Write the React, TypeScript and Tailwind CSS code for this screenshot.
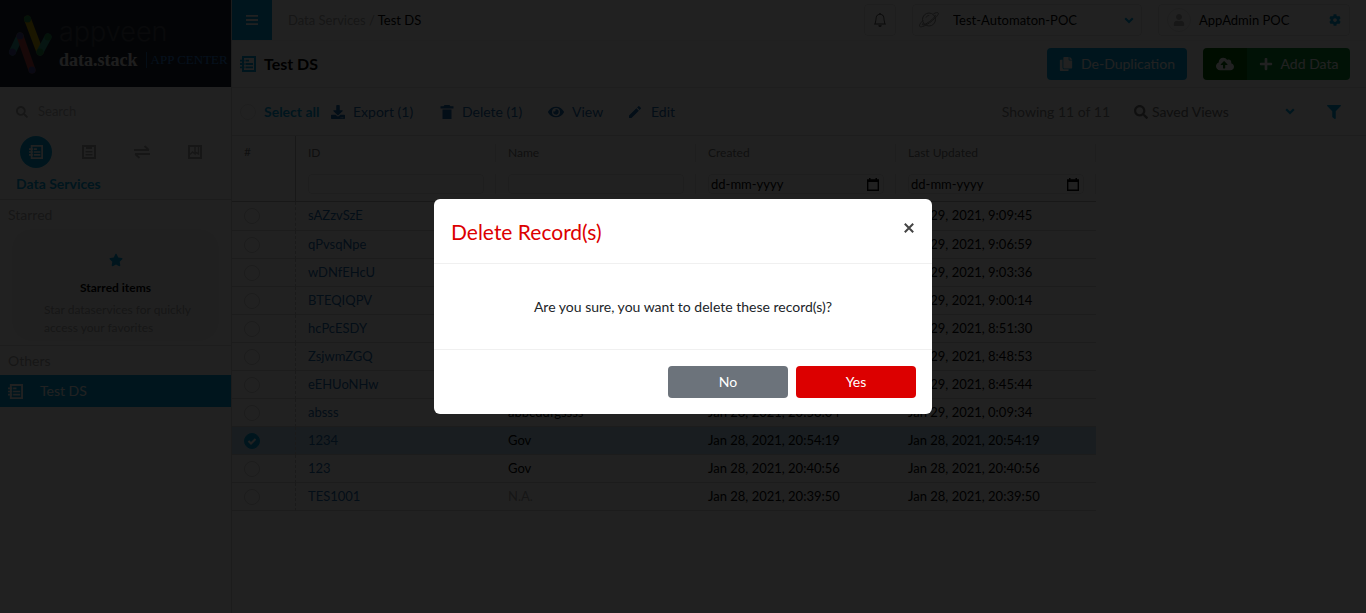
import { useState } from "react";
import type { ReactNode } from "react";
import { BsBell } from "react-icons/bs";
import {
  FaCloudUploadAlt,
  FaCog,
  FaCopy,
  FaDownload,
  FaEye,
  FaFilter,
  FaPlus,
  FaSearch,
  FaStar,
  FaUser,
} from "react-icons/fa";
import { MdEdit } from "react-icons/md";

type RecordRow = {
  id: string;
  name: string;
  created: string;
  updated: string;
};

const records: RecordRow[] = [
  { id: "sAZzvSzE", name: "N.A.", created: "Jan 29, 2021, 9:09:45", updated: "Jan 29, 2021, 9:09:45" },
  { id: "qPvsqNpe", name: "N.A.", created: "Jan 29, 2021, 9:06:59", updated: "Jan 29, 2021, 9:06:59" },
  { id: "wDNfEHcU", name: "N.A.", created: "Jan 29, 2021, 9:03:36", updated: "Jan 29, 2021, 9:03:36" },
  { id: "BTEQIQPV", name: "N.A.", created: "Jan 29, 2021, 9:00:14", updated: "Jan 29, 2021, 9:00:14" },
  { id: "hcPcESDY", name: "N.A.", created: "Jan 29, 2021, 8:51:30", updated: "Jan 29, 2021, 8:51:30" },
  { id: "ZsjwmZGQ", name: "N.A.", created: "Jan 29, 2021, 8:48:53", updated: "Jan 29, 2021, 8:48:53" },
  { id: "eEHUoNHw", name: "N.A.", created: "Jan 29, 2021, 8:45:44", updated: "Jan 29, 2021, 8:45:44" },
  { id: "absss", name: "abbcddfgssss", created: "Jan 28, 2021, 20:58:04", updated: "Jan 29, 2021, 0:09:34" },
  { id: "1234", name: "Gov", created: "Jan 28, 2021, 20:54:19", updated: "Jan 28, 2021, 20:54:19" },
  { id: "123", name: "Gov", created: "Jan 28, 2021, 20:40:56", updated: "Jan 28, 2021, 20:40:56" },
  { id: "TES1001", name: "N.A.", created: "Jan 28, 2021, 20:39:50", updated: "Jan 28, 2021, 20:39:50" },
];

function NotebookIcon({ className }: { className?: string }) {
  return (
    <svg viewBox="0 0 16 16" className={className} fill="none" stroke="currentColor" strokeWidth="2" aria-hidden="true">
      <path d="M3 1h12v14H3z" />
      <path d="M0 4.700h4.500M0 8h4.500M0 11.300h4.500" strokeWidth="1.800" />
      <path d="M5.500 4.700h3.500M5.500 8h7.500M5.500 11.300h7.500" strokeWidth="1.800" />
    </svg>
  );
}

function ClipboardIcon() {
  return (
    <svg viewBox="0 0 14 14" className="size-3.5" fill="currentColor" aria-hidden="true">
      <path fillRule="evenodd" d="M0 0h14v14H0zM2 2v10h10V2h-2v2H4V2zM3.500 6h7v1.500h-7zM3.500 9h7v1.500h-7z" />
    </svg>
  );
}

function ExchangeIcon() {
  return (
    <svg viewBox="0 0 16 13" className="h-3.5 w-4" fill="none" stroke="currentColor" strokeWidth="2" aria-hidden="true">
      <path d="M0 4.600h15M10.500.6l4.300 4M16 8.400H1M5.500 12.400l-4.300-4" />
    </svg>
  );
}

function BookmarkIcon() {
  return (
    <svg viewBox="0 0 14 14" className="size-3.5" fill="none" stroke="currentColor" strokeWidth="2" aria-hidden="true">
      <path d="M1 1h12v12H1z" />
      <path d="M2 9.500 4.500 7 7 9V1M10.500 1v8L7 7" strokeWidth="1.500" />
    </svg>
  );
}

function TrashIcon() {
  return (
    <svg viewBox="0 0 14 14" className="size-3.5" fill="currentColor" aria-hidden="true">
      <path d="M4.500 0h5l1 1.200H13.500v2.300H.5V1.200h3zM2.500 4.500h9V14h-9z" />
    </svg>
  );
}

function ChevronIcon() {
  return (
    <svg viewBox="0 0 10 7" className="h-[7px] w-2.5 shrink-0 text-[#00a5e0]" fill="none" stroke="currentColor" strokeWidth="2.200" aria-hidden="true">
      <path d="M1.200 1.200 5 5l3.800-3.800" />
    </svg>
  );
}

function PlanetIcon() {
  return (
    <svg viewBox="0 0 20 16" className="h-4 w-5 shrink-0 text-[#888]" fill="none" stroke="currentColor" aria-hidden="true">
      <circle cx="10" cy="7.500" r="6.500" />
      <path d="M4 8.500C1.200 11.200-.2 13.500.8 14.500c1.200 1.300 6.700-1.200 11.200-4.800s8.200-7.400 7.200-8.700c-.6-.8-2.600-.3-4.700.7" />
      <path d="M4.500 11c-.8.800-1.300 1.500-1 1.800 1 .6 5-1.600 8.300-4.300s5.400-5 4.800-5.600" />
      <path d="M7 5.500c.6-1.300 1.800-2 3.200-2" />
    </svg>
  );
}

function CalendarIcon() {
  return (
    <svg viewBox="0 0 12 13" className="h-[13px] w-3 shrink-0" fill="currentColor" aria-hidden="true">
      <path fillRule="evenodd" d="M2 0h1.500v1.200h5V0H10v1.200h2V13H0V1.200h2zM1.400 4v7.600h9.200V4z" />
    </svg>
  );
}

function Logo() {
  return (
    <div className="flex h-[87px] items-center gap-[7px] bg-[#1c2530] pl-2">
      <svg viewBox="0 0 44 60" className="h-[60px] w-11 shrink-0" fill="none" strokeWidth="7" strokeLinecap="round" aria-hidden="true">
        <path d="M4.500 38 12 22" stroke="#2f9c94" />
        <path d="M12 22 24 56" stroke="#b8433f" />
        <path d="M19.500 5 32 38" stroke="#c9a800" />
        <path d="M32 38 40 23" stroke="#2fa58c" />
        <path d="M4.500 38v0M12 22v0M24 56v0" stroke="#4a4a94" />
        <path d="M19.500 5v0M32 38v0M40 23v0" stroke="#1f8a45" />
      </svg>
      <div className="flex flex-col">
        <span className="font-[Inter] text-[27px] leading-8 font-light text-[#454b53]">appveen</span>
        <div className="flex h-6 items-center whitespace-nowrap font-['Liberation_Serif',serif]">
          <span className="text-lg leading-6 font-bold text-[#e8e8e8]">data.stack</span>
          <span className="ml-2 h-4 border-l border-[#1f66ad] pl-1 text-[13px] leading-4 text-[#2b80dd]">APP CENTER</span>
        </div>
      </div>
    </div>
  );
}

function SideTab({ label, active, children }: { label: string; active?: boolean; children: ReactNode }) {
  return (
    <button
      type="button"
      aria-label={label}
      className={
        active
          ? "flex size-8 items-center justify-center rounded-full bg-[#00a5e0] text-white"
          : "flex size-8 items-center justify-center rounded-full text-[#aaa]"
      }
    >
      {children}
    </button>
  );
}

function Sidebar() {
  return (
    <aside className="flex w-[232px] shrink-0 flex-col border-r border-[#d8d8d8]">
      <Logo />
      <label className="flex h-[49px] items-center gap-2.5 pl-4 text-[#aaa]">
        <FaSearch className="size-3 shrink-0" />
        <input aria-label="Search" placeholder="Search" className="w-40 text-[13px] outline-none placeholder:text-[#b4b4b4]" />
      </label>
      <nav className="flex gap-[21px] pl-5">
        <SideTab label="Data Services" active>
          <NotebookIcon className="size-3.5" />
        </SideTab>
        <SideTab label="Library">
          <ClipboardIcon />
        </SideTab>
        <SideTab label="Partners">
          <ExchangeIcon />
        </SideTab>
        <SideTab label="Bookmarks">
          <BookmarkIcon />
        </SideTab>
      </nav>
      <h2 className="flex h-8 items-center border-b border-[#d8d8d8] pl-4 text-sm font-bold text-[#00a5e0]">Data Services</h2>
      <section className="border-b border-[#dcdcdc] pb-1">
        <h3 className="flex h-[29px] items-center pl-2 text-sm text-[#aaa]">Starred</h3>
        <div className="mx-3 flex h-28 flex-col items-center rounded-[20px] bg-[#f6f6f6] pt-6">
          <FaStar className="size-3.5 text-[#00a5e0]" />
          <p className="mt-3 text-xs leading-[18px] font-bold">Starred items</p>
          <p className="mt-1 ml-8 w-[152px] self-start text-xs leading-[18px] text-[#aaa]">Star dataservices for quickly access your favorites</p>
        </div>
      </section>
      <h3 className="flex h-[29px] items-center pl-2 text-sm text-[#aaa]">Others</h3>
      <a href="#test-ds" className="flex h-8 items-center gap-[17px] bg-[#00a5e0] pl-2 text-sm text-white">
        <NotebookIcon className="size-[15px]" />
        Test DS
      </a>
    </aside>
  );
}

function TopBar() {
  return (
    <header className="flex h-[41px] items-center border-b border-[#f2f2f2] pr-4">
      <button type="button" aria-label="Toggle menu" className="flex h-10 w-10 items-center justify-center self-start bg-[#00a5e0] text-white">
        <svg viewBox="0 0 12 10" className="h-2.5 w-3" fill="currentColor" aria-hidden="true">
          <path d="M0 0h12v1.800H0zM0 4.100h12v1.800H0zM0 8.200h12V10H0z" />
        </svg>
      </button>
      <p className="ml-4 text-[13px] leading-[22px] text-[#aaa]">
        <a href="#services">Data Services</a> / <span className="text-black">Test DS</span>
      </p>
      <div className="ml-auto flex items-center gap-4">
        <button type="button" aria-label="Notifications" className="flex size-8 items-center justify-center rounded border border-[#e4e4e4] text-[#444]">
          <BsBell className="size-3.5" />
        </button>
        <label className="flex h-8 w-[230px] items-center gap-3.5 rounded border border-[#e4e4e4] pr-[7px] pl-1.5">
          <PlanetIcon />
          <select aria-label="App" className="min-w-0 flex-1 appearance-none text-[13px] leading-[22px] outline-none">
            <option>Test-Automaton-POC</option>
          </select>
          <ChevronIcon />
        </label>
        <button type="button" className="flex h-8 w-48 items-center rounded border border-[#e4e4e4] px-2 text-[13px]">
          <span className="flex size-6 items-center justify-center rounded-full border border-[#e4e4e4] text-[#b0b0b0]">
            <FaUser className="size-3" />
          </span>
          <span className="ml-2 leading-[22px]">AppAdmin POC</span>
          <FaCog className="ml-auto size-3 text-[#00a5e0]" />
        </button>
      </div>
    </header>
  );
}

function TitleBar() {
  return (
    <div className="flex h-[47px] items-center border-b border-[#e8e8e8] pr-4 pl-2">
      <NotebookIcon className="size-4 text-[#00a5e0]" />
      <h1 className="ml-2 text-base font-bold">Test DS</h1>
      <button type="button" className="ml-auto flex h-8 w-[140px] items-center justify-center gap-2 rounded bg-[#00a5e0] text-sm text-white">
        <FaCopy className="size-3.5" />
        De-Duplication
      </button>
      <div className="ml-4 flex overflow-hidden rounded text-sm text-white">
        <button type="button" aria-label="Upload" className="flex h-8 w-11 items-center justify-center bg-[#006400]">
          <FaCloudUploadAlt className="size-[18px]" />
        </button>
        <button type="button" className="flex h-8 w-[103px] items-center justify-center gap-2 bg-[#0d8a32]">
          <FaPlus className="size-3.5" />
          Add Data
        </button>
      </div>
    </div>
  );
}

function ToolButton({ icon, label, className }: { icon: ReactNode; label: string; className: string }) {
  return (
    <button type="button" className={"flex items-center gap-2 text-sm text-[#1a6bb0] " + className}>
      {icon}
      {label}
    </button>
  );
}

function Toolbar() {
  return (
    <div className="flex h-12 items-center border-b border-[#dcdcdc] pr-4 pl-2">
      <label className="flex w-[91px] items-center gap-2 text-sm font-bold whitespace-nowrap text-[#00a5e0]">
        <input type="checkbox" className="size-4 shrink-0 appearance-none rounded-full border border-[#e4e4e4]" />
        Select all
      </label>
      <ToolButton icon={<FaDownload className="size-3.5" />} label="Export (1)" className="w-[109px]" />
      <ToolButton icon={<TrashIcon />} label="Delete (1)" className="w-[108px]" />
      <ToolButton icon={<FaEye className="size-4" />} label="View" className="w-[79px]" />
      <ToolButton icon={<MdEdit className="size-4" />} label="Edit" className="w-16" />
      <span className="ml-auto text-sm text-[#888]">Showing 11 of 11</span>
      <label className="ml-4 flex h-8 w-44 items-center gap-1 rounded bg-[#fafafa] pr-[7px] pl-2 text-[#777]">
        <FaSearch className="size-3.5 shrink-0" />
        <select aria-label="Saved views" className="min-w-0 flex-1 appearance-none text-sm outline-none">
          <option>Saved Views</option>
        </select>
        <ChevronIcon />
      </label>
      <button type="button" aria-label="Filter" className="ml-4 flex size-8 items-center justify-center rounded bg-[#fafafa] text-[#00a5e0]">
        <FaFilter className="size-3.5" />
      </button>
    </div>
  );
}

function HeadCell({ label, date }: { label: string; date?: boolean }) {
  return (
    <th scope="col" className="h-[66px] w-[200px] border-b border-[#b8b8b8] p-0 text-left align-top font-normal">
      <div className="mt-2 flex h-[18px] items-center border-r border-[#e8e8e8] pl-3 text-xs text-[#777]">{label}</div>
      <div className="mt-3 flex h-5 items-center border-r border-[#e8e8e8] pr-[11px] pl-3">
        <label className="flex h-5 flex-1 items-center rounded border border-[#e4e4e4] px-0.5">
          <input
            aria-label={"Filter " + label}
            placeholder={date ? "dd-mm-yyyy" : undefined}
            className="w-full min-w-0 flex-1 text-[13px] leading-4 outline-none placeholder:text-black"
          />
          {date && (
            <span className="pr-0.5">
              <CalendarIcon />
            </span>
          )}
        </label>
      </div>
    </th>
  );
}

function RecordTable() {
  const [selected, setSelected] = useState<string[]>(["1234"]);
  const toggle = (id: string) =>
    setSelected((now) => (now.includes(id) ? now.filter((x) => x !== id) : [...now, id]));

  return (
    <table className="w-[864px] table-fixed border-separate border-spacing-0 text-[13px]">
      <thead>
        <tr>
          <th scope="col" className="w-16 border-r border-b border-[#b8b8b8] p-0 pt-2 pl-3 text-left align-top text-xs font-normal text-[#777]">
            #
          </th>
          <HeadCell label="ID" />
          <HeadCell label="Name" />
          <HeadCell label="Created" date />
          <HeadCell label="Last Updated" date />
        </tr>
      </thead>
      <tbody>
        {records.map((row, index) => {
          const on = selected.includes(row.id);
          return (
            <tr key={row.id} className={(index === 0 ? "h-[29px]" : "h-7") + (on ? " bg-[#bfe0f2]" : "")}>
              <td className="border-r border-b border-r-[#c4c4c4] border-b-[#d8d8d8] p-0 pl-3 [border-right-style:dashed]">
                <span className="flex size-4 items-center">
                  <input
                    type="checkbox"
                    aria-label={"Select " + row.id}
                    checked={on}
                    onChange={() => toggle(row.id)}
                    className="peer size-4 shrink-0 appearance-none rounded-full border border-[#d4d4d4] checked:border-[#00a5e0] checked:bg-[#00a5e0]"
                  />
                  <svg viewBox="0 0 16 16" className="pointer-events-none -ml-4 hidden size-4 shrink-0 peer-checked:block" fill="none" stroke="#fff" strokeWidth="2" aria-hidden="true">
                    <path d="M4.500 8 7 10.500 11.500 6" />
                  </svg>
                </span>
              </td>
              <td className="border-b border-[#d8d8d8] p-0 pl-3">
                <a href={"#" + row.id} className="text-[#1a6bb0]">
                  {row.id}
                </a>
              </td>
              <td className={"border-b border-[#d8d8d8] p-0 pl-3 " + (row.name === "N.A." ? "text-[#aaa]" : "")}>{row.name}</td>
              <td className="border-b border-[#d8d8d8] p-0 pl-3">{row.created}</td>
              <td className="border-b border-[#d8d8d8] p-0 pl-3">{row.updated}</td>
            </tr>
          );
        })}
      </tbody>
    </table>
  );
}

function DeleteDialog() {
  return (
    <div className="fixed inset-0 flex items-center justify-center bg-black/87">
      <div role="dialog" aria-modal="true" aria-labelledby="dialog-title" className="w-[498px] rounded-md bg-white">
        <div className="flex h-[65px] items-start justify-between border-b border-[#f0f0f0] pt-[17px] pr-4 pl-[17px]">
          <h2 id="dialog-title" className="text-[21px] leading-8 text-[#dc0000]">
            Delete Record(s)
          </h2>
          <button type="button" aria-label="Close" className="flex size-6 items-center justify-end pr-0.5 text-[#444]">
            <svg viewBox="0 0 10 10" className="size-2.5" fill="none" stroke="currentColor" strokeWidth="2" aria-hidden="true">
              <path d="m.8.8 8.400 8.400M9.200.8.8 9.200" />
            </svg>
          </button>
        </div>
        <p className="flex h-[86px] items-center justify-center border-b border-[#f0f0f0] text-sm text-[#212529]">
          Are you sure, you want to delete these record(s)?
        </p>
        <div className="flex justify-end gap-2 p-4 text-sm text-white">
          <button type="button" className="h-8 w-[120px] rounded bg-[#6c737b]">
            No
          </button>
          <button type="button" className="h-8 w-[120px] rounded bg-[#dc0000]">
            Yes
          </button>
        </div>
      </div>
    </div>
  );
}

export default function App() {
  return (
    <div className="flex min-h-screen bg-white font-[Lato,sans-serif] text-black">
      <Sidebar />
      <main className="flex min-w-0 flex-1 flex-col">
        <TopBar />
        <TitleBar />
        <Toolbar />
        <RecordTable />
      </main>
      <DeleteDialog />
    </div>
  );
}
